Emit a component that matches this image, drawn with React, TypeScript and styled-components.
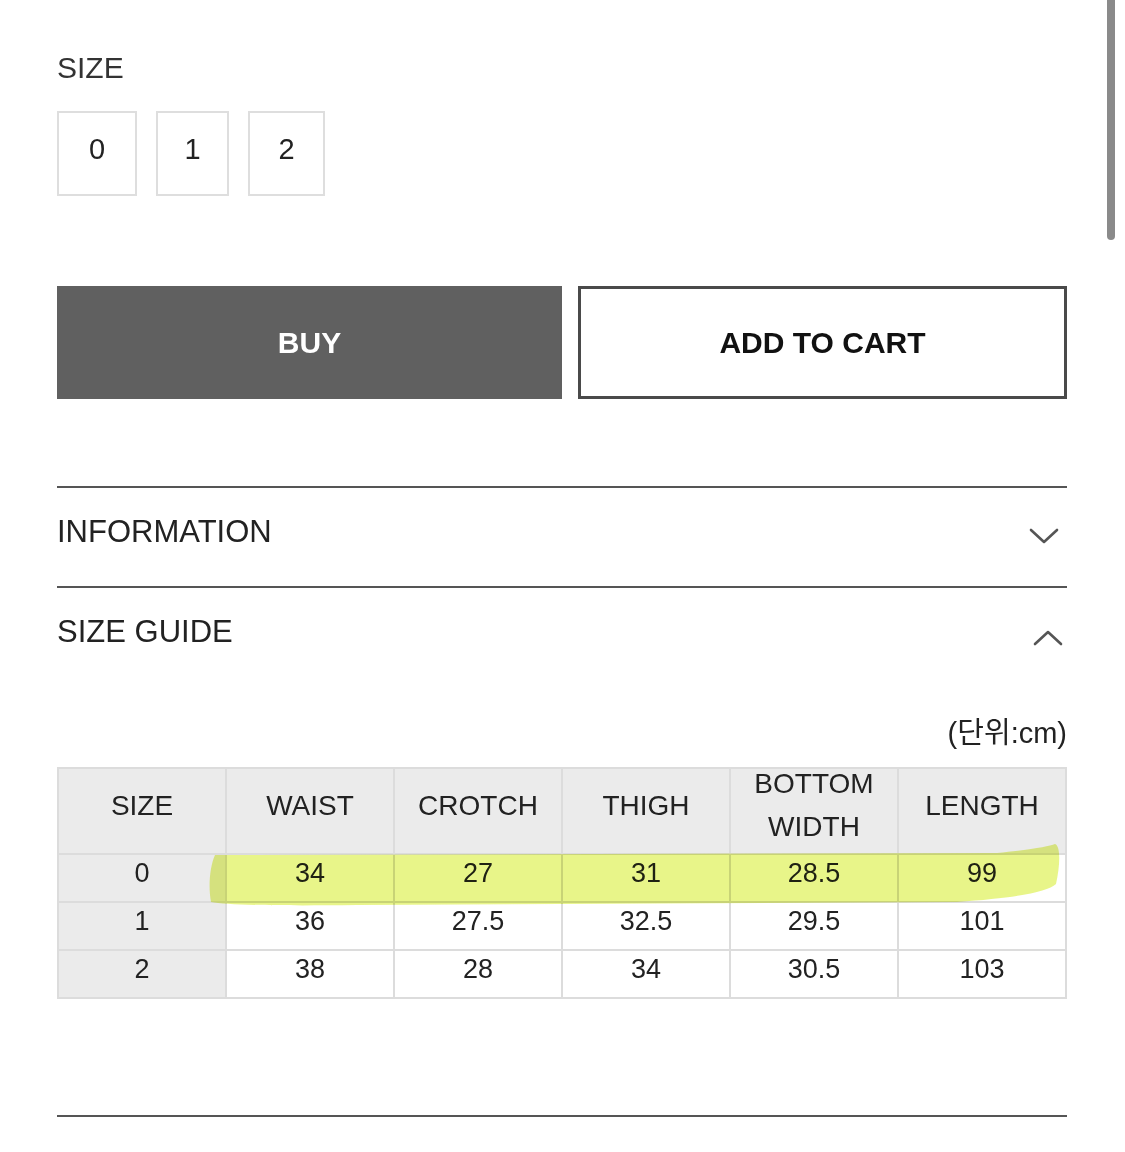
import React from 'react';
import styled, { createGlobalStyle } from 'styled-components';

const GlobalStyle = createGlobalStyle`
  html, body {
    margin: 0;
    padding: 0;
    background: #ffffff;
  }
  body {
    font-family: 'Liberation Sans', 'Noto Sans CJK KR', Arial, sans-serif;
    color: #222;
  }
`;

const Page = styled.div`
  position: relative;
  width: 1125px;
  min-height: 1152px;
  box-sizing: border-box;
  padding: 50px 58px 0 57px;
  overflow: hidden;
`;

const ScrollThumb = styled.div`
  position: absolute;
  top: -6px;
  right: 10px;
  width: 8px;
  height: 246px;
  border-radius: 4px;
  background: #8a8a8a;
`;

const Label = styled.div`
  font-size: 30px;
  line-height: 36px;
  color: #333;
`;

const SizeList = styled.div`
  display: flex;
  gap: 19px;
  margin-top: 25px;
`;

const SizeOption = styled.button<{ $w: number }>`
  width: ${(p) => p.$w}px;
  height: 85px;
  box-sizing: border-box;
  border: 2px solid #dedede;
  background: #fff;
  font-family: inherit;
  font-size: 29px;
  color: #222;
  padding: 0 0 8px;
  display: flex;
  align-items: center;
  justify-content: center;
`;

const Actions = styled.div`
  display: flex;
  gap: 16px;
  margin-top: 90px;
`;

const ActionButton = styled.button<{ $primary?: boolean }>`
  height: 113px;
  box-sizing: border-box;
  flex: ${(p) => (p.$primary ? '0 0 505px' : '1')};
  border: ${(p) => (p.$primary ? 'none' : '3px solid #4a4a4a')};
  background: ${(p) => (p.$primary ? '#606060' : '#fff')};
  color: ${(p) => (p.$primary ? '#fff' : '#111')};
  font-family: inherit;
  font-size: 30px;
  font-weight: 700;
  padding: 0;
`;

const Accordion = styled.div`
  margin-top: 87px;
`;

const Section = styled.section<{ $last?: boolean }>`
  border-top: 2px solid #555;
  padding-bottom: ${(p) => (p.$last ? '0' : '10px')};
`;

const SectionHead = styled.div`
  height: 88px;
  display: flex;
  align-items: center;
  justify-content: space-between;
  font-size: 31px;
  color: #222;
`;

const Chevron = styled.svg<{ $shift: number; $drop: number }>`
  width: 30px;
  height: 18px;
  margin-right: ${(p) => p.$shift}px;
  margin-top: ${(p) => p.$drop}px;
`;

const Unit = styled.div`
  text-align: right;
  font-size: 29px;
  line-height: 34px;
  color: #222;
  margin-top: 40px;
`;

const TableWrap = styled.div`
  position: relative;
  margin-top: 17px;
`;

const Table = styled.table`
  width: 100%;
  table-layout: fixed;
  border-collapse: collapse;
  border: 2px solid #dcdcdc;
`;

const HeadCell = styled.th`
  height: 84px;
  background: #ebebeb;
  border: 2px solid #dcdcdc;
  font-weight: 400;
  font-size: 28px;
  color: #222;
  padding: 0;
  vertical-align: middle;
`;

const HeadLabel = styled.div`
  line-height: 43px;
  margin-top: -12px;
`;

const Cell = styled.td<{ $first?: boolean }>`
  height: 48px;
  box-sizing: border-box;
  background: ${(p) => (p.$first ? '#ebebeb' : '#fff')};
  border: 2px solid #dcdcdc;
  text-align: center;
  font-size: 27px;
  color: #222;
  padding: 0 0 10px;
`;

const Marker = styled.svg`
  position: absolute;
  left: 0;
  top: 0;
  width: 1010px;
  height: 232px;
  pointer-events: none;
  mix-blend-mode: multiply;
`;

const Rule = styled.div`
  border-top: 2px solid #555;
  margin-top: 116px;
`;

const headers = ['SIZE', 'WAIST', 'CROTCH', 'THIGH', 'BOTTOM\nWIDTH', 'LENGTH'];
const rows = [
  ['0', '34', '27', '31', '28.5', '99'],
  ['1', '36', '27.5', '32.5', '29.5', '101'],
  ['2', '38', '28', '34', '30.5', '103'],
];

function ChevronIcon({ up, shift, drop }: { up?: boolean; shift: number; drop: number }) {
  return (
    <Chevron $shift={shift} $drop={drop} viewBox="0 0 30 18">
      <path
        d={up ? 'M2 15 L15 3 L28 15' : 'M2 3 L15 15 L28 3'}
        fill="none"
        stroke="#555"
        strokeWidth="2.6"
        strokeLinecap="round"
        strokeLinejoin="round"
      />
    </Chevron>
  );
}

export default function App() {
  return (
    <Page>
      <GlobalStyle />
      <ScrollThumb />
      <Label>SIZE</Label>
      <SizeList>
        <SizeOption $w={80}>0</SizeOption>
        <SizeOption $w={73}>1</SizeOption>
        <SizeOption $w={77}>2</SizeOption>
      </SizeList>
      <Actions>
        <ActionButton $primary>BUY</ActionButton>
        <ActionButton>ADD TO CART</ActionButton>
      </Actions>
      <Accordion>
        <Section>
          <SectionHead>
            INFORMATION
            <ChevronIcon shift={8} drop={7} />
          </SectionHead>
        </Section>
        <Section $last>
          <SectionHead>
            SIZE GUIDE
            <ChevronIcon up shift={4} drop={11} />
          </SectionHead>
          <Unit>(단위:cm)</Unit>
          <TableWrap>
            <Table>
              <thead>
                <tr>
                  {headers.map((h) => (
                    <HeadCell key={h}>
                      <HeadLabel>
                        {h.split('\n').map((line, i) => (
                          <div key={i}>{line}</div>
                        ))}
                      </HeadLabel>
                    </HeadCell>
                  ))}
                </tr>
              </thead>
              <tbody>
                {rows.map((r) => (
                  <tr key={r[0]}>
                    {r.map((v, i) => (
                      <Cell key={i} $first={i === 0}>
                        {v}
                      </Cell>
                    ))}
                  </tr>
                ))}
              </tbody>
            </Table>
            <Marker viewBox="0 0 1010 232">
              <path
                d="M158 88 L940 86 C975 83 992 79 998 77 C1004 79 1003 99 999 117 C990 125 960 131 900 135 L300 138 C220 139 170 138 154 135 C151 119 153 99 158 88 Z"
                fill="#dcef4a"
                fillOpacity="0.65"
              />
            </Marker>
          </TableWrap>
          <Rule />
        </Section>
      </Accordion>
    </Page>
  );
}
